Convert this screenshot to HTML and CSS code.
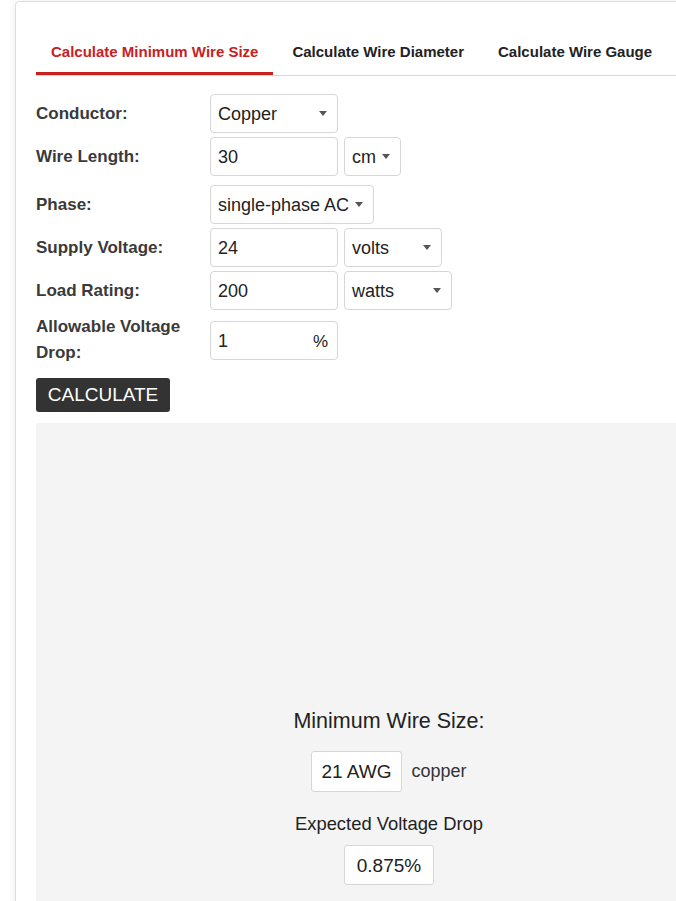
FILE: index.html
```html
<!DOCTYPE html>
<html>
<head>
<meta charset="utf-8">
<link rel="stylesheet" href="styles.css">
</head>
<body>
<div class="card">
  <ul class="tabs">
    <li class="tab active">Calculate Minimum Wire Size</li>
    <li class="tab">Calculate Wire Diameter</li>
    <li class="tab">Calculate Wire Gauge</li>
  </ul>
  <div class="form">
    <div class="row">
      <div class="label">Conductor:</div>
      <div class="field select w-conductor">Copper</div>
    </div>
    <div class="row">
      <div class="label">Wire Length:</div>
      <div class="field input">30</div>
      <div class="field select w-cm">cm</div>
    </div>
    <div class="row row-phase">
      <div class="label">Phase:</div>
      <div class="field select w-phase">single-phase AC</div>
    </div>
    <div class="row">
      <div class="label">Supply Voltage:</div>
      <div class="field input">24</div>
      <div class="field select w-volts">volts</div>
    </div>
    <div class="row">
      <div class="label">Load Rating:</div>
      <div class="field input">200</div>
      <div class="field select w-watts">watts</div>
    </div>
    <div class="row">
      <div class="label label-2">Allowable Voltage Drop:</div>
      <div class="field input pct"><span>1</span><span class="unit">%</span></div>
    </div>
    <button class="btn">CALCULATE</button>
  </div>
  <div class="result">
    <div class="res-title">Minimum Wire Size:</div>
    <div class="res-line">
      <div class="res-box">21 AWG</div>
      <span class="res-note">copper</span>
    </div>
    <div class="res-sub">Expected Voltage Drop</div>
    <div class="res-line">
      <div class="res-box res-box-drop">0.875%</div>
    </div>
  </div>
</div>
</body>
</html>
```
FILE: styles.css
```css
html, body {
  margin: 0;
  padding: 0;
  overflow: hidden;
  background: #fff;
  font-family: "Liberation Sans", Arial, sans-serif;
  color: #333;
}
.card {
  margin: 1px 0 0 15px;
  width: 760px;
  min-height: 1000px;
  border: 1px solid #dcdcdc;
  border-radius: 4px;
  box-shadow: 0 0 8px rgba(0, 0, 0, 0.07);
  padding: 31px 20px 0 20px;
  box-sizing: border-box;
  background: #fff;
}
.tabs {
  list-style: none;
  margin: 0;
  padding: 0;
  display: flex;
  border-bottom: 1px solid #d8d8d8;
}
.tab {
  font-size: 15px;
  font-weight: 700;
  line-height: 20px;
  padding: 9px 15px 10px;
  margin-right: 4px;
  color: #222;
  border-bottom: 3px solid transparent;
}
.tab.active {
  color: #c8201f;
  border-bottom-color: #c8201f;
}
.form {
  margin-top: 18px;
  display: flex;
  flex-direction: column;
  gap: 4px;
  align-items: flex-start;
}
.row {
  display: flex;
  align-items: center;
  gap: 6px;
}
.row-phase {
  margin-top: 5px;
}
.label {
  width: 168px;
  font-size: 17px;
  font-weight: 700;
  line-height: 26px;
  color: #3a3a3a;
}
.field {
  height: 39px;
  box-sizing: border-box;
  border: 1px solid #d6d6d6;
  border-radius: 4px;
  font-size: 18px;
  line-height: 37px;
  padding: 1px 7px 0;
  color: #222;
  background: #fff;
  position: relative;
}
.input {
  width: 128px;
}
.pct {
  display: flex;
  justify-content: space-between;
  padding-right: 9px;
}
.pct .unit {
  font-size: 17px;
}
.select::after {
  content: "";
  position: absolute;
  right: 10px;
  top: 16px;
  border-left: 4px solid transparent;
  border-right: 4px solid transparent;
  border-top: 5px solid #555;
}
.w-conductor { width: 128px; }
.w-cm { width: 57px; }
.w-phase { width: 164px; }
.w-volts { width: 98px; }
.w-watts { width: 108px; }
.btn {
  margin-top: 8px;
  width: 134px;
  height: 34px;
  background: #333;
  color: #fff;
  border: none;
  border-radius: 3px;
  font-family: "Liberation Sans", Arial, sans-serif;
  font-size: 19px;
  padding: 0;
}
.result {
  margin-top: 11px;
  background: #f4f4f4;
  border-radius: 3px 3px 0 0;
  padding-top: 286px;
  min-height: 600px;
  width: 706px;
  display: flex;
  flex-direction: column;
  align-items: center;
}
.res-title {
  font-size: 21.5px;
  line-height: 24px;
  color: #222;
}
.res-line {
  display: flex;
  align-items: center;
  margin-top: 18px;
}
.res-box {
  height: 41px;
  box-sizing: border-box;
  border: 1px solid #d6d6d6;
  border-radius: 3px;
  background: #fff;
  padding: 0 9px;
  font-size: 19px;
  line-height: 39px;
  color: #222;
}
.res-note {
  font-size: 18px;
  margin-left: 10px;
  color: #333;
}
.res-sub {
  margin-top: 21px;
  font-size: 18.4px;
  line-height: 22px;
  color: #222;
}
.res-sub + .res-line {
  margin-top: 10px;
}
.res-box-drop {
  height: 40px;
  width: 90px;
  text-align: center;
  padding: 0;
}
```
